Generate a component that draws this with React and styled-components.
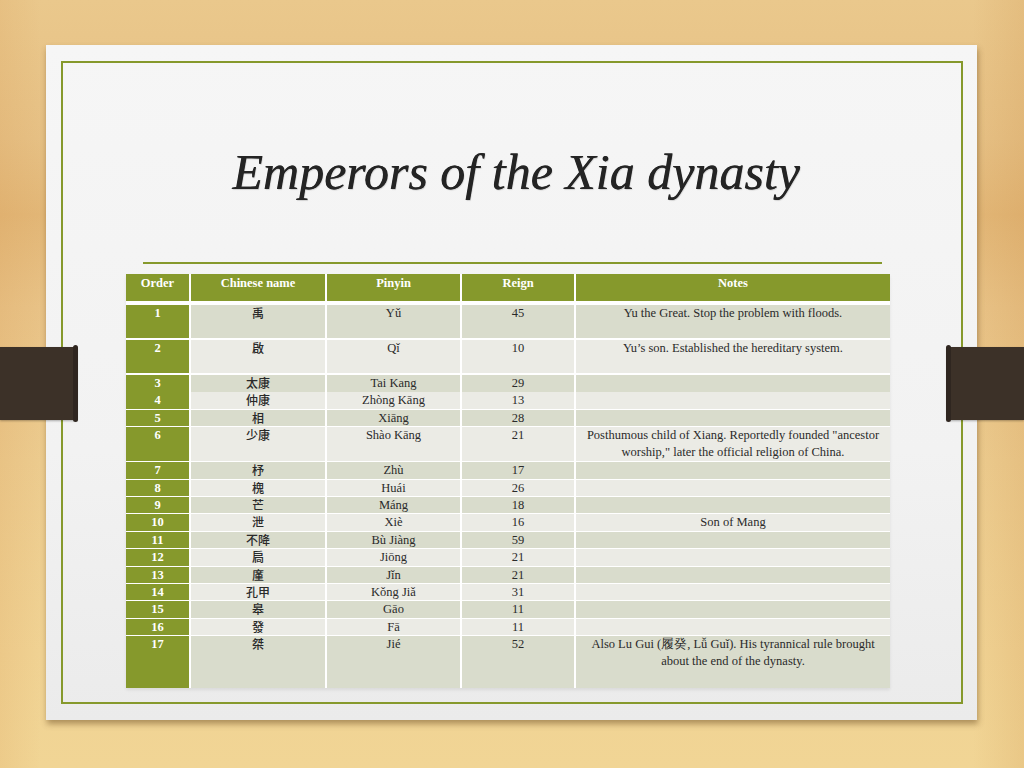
import styled, { createGlobalStyle } from 'styled-components';

const GlobalStyle = createGlobalStyle`
  html, body {
    margin: 0;
    padding: 0;
  }
  body {
    font-family: "Liberation Serif", serif;
  }
`;

const Desk = styled.div`
  position: relative;
  width: 1024px;
  height: 768px;
  overflow: hidden;
  box-sizing: border-box;
  padding: 45px 0 0 46px;
  background:
    linear-gradient(90deg, rgba(214, 150, 80, 0.16) 0%, rgba(214, 150, 80, 0) 4%, rgba(214, 150, 80, 0) 95%, rgba(200, 140, 70, 0.18) 100%),
    linear-gradient(180deg, #eac88c 0%, #e6c084 18%, #e2b676 28%, #e8c286 40%, #eccb8e 60%, #f0d293 85%, #f1d595 100%);
`;

const Paper = styled.div`
  width: 931px;
  height: 675px;
  box-sizing: border-box;
  padding: 16px 14px 16px 15px;
  background: linear-gradient(180deg, #f6f6f6 0%, #f2f2f2 60%, #ebebeb 100%);
  box-shadow: 1px 4px 6px rgba(90, 60, 20, 0.45);
`;

const Frame = styled.div`
  width: 902px;
  height: 643px;
  box-sizing: border-box;
  border: 2px solid #86992c;
  display: flex;
  flex-direction: column;
`;

const Title = styled.h1`
  margin: 84px 0 0;
  padding-left: 8px;
  font-family: "Liberation Serif", serif;
  font-style: italic;
  font-weight: normal;
  font-size: 50px;
  line-height: 50px;
  text-align: center;
  color: #242424;
  text-shadow: 0.5px 0 0 #242424, 1px 1px 1px rgba(0, 0, 0, 0.15);
`;

const Rule = styled.div`
  margin: 65px 0 0 80px;
  width: 739px;
  height: 2px;
  background: #86992c;
`;

const Table = styled.div`
  margin: 10px 0 0 63px;
  width: 764px;
  display: flex;
  flex-direction: column;
  background: #ffffff;
  box-shadow: 0 2px 3px rgba(0, 0, 0, 0.08);
`;

const Row = styled.div`
  display: grid;
  grid-template-columns: 63px 134px 133px 112px 314px;
  column-gap: 2px;
  margin-bottom: ${p => (p.$head ? '4px' : p.$last ? '0' : '2px')};
  height: ${p => p.$h}px;
`;

const Cell = styled.div`
  background: ${p => (p.$head || p.$order ? '#86992c' : p.$odd ? '#d9dccc' : '#ebebe5')};
  color: ${p => (p.$head || p.$order ? '#ffffff' : '#2a2a2a')};
  font-family: ${p => (p.$zh ? '"Noto Sans CJK TC", "Noto Sans CJK SC", sans-serif' : '"Liberation Serif", serif')};
  font-weight: ${p => (p.$head || p.$order ? 'bold' : p.$zh ? 500 : 'normal')};
  font-size: ${p => (p.$zh ? '12px' : '12.5px')};
  line-height: ${p => (p.$head ? '19px' : '16.5px')};
  text-align: center;
  overflow: visible;
  white-space: nowrap;
`;

const Note = styled(Cell)`
  white-space: normal;
  line-height: 17px;
  padding: 0 10px;
`;

const rows = [
  { o: 1, zh: '禹', py: 'Yǔ', r: 45, n: 'Yu the Great. Stop the problem with floods.', h: 33 },
  { o: 2, zh: '啟', py: 'Qǐ', r: 10, n: 'Yu’s son. Established the hereditary system.', h: 33 },
  { o: 3, zh: '太康', py: 'Tai Kang', r: 29 },
  { o: 4, zh: '仲康', py: 'Zhòng Kāng', r: 13 },
  { o: 5, zh: '相', py: 'Xiāng', r: 28 },
  {
    o: 6,
    zh: '少康',
    py: 'Shào Kāng',
    r: 21,
    n: 'Posthumous child of Xiang. Reportedly founded "ancestor worship," later the official religion of China.',
    h: 33,
  },
  { o: 7, zh: '杼', py: 'Zhù', r: 17 },
  { o: 8, zh: '槐', py: 'Huái', r: 26 },
  { o: 9, zh: '芒', py: 'Máng', r: 18 },
  { o: 10, zh: '泄', py: 'Xiè', r: 16, n: 'Son of Mang' },
  { o: 11, zh: '不降', py: 'Bù Jiàng', r: 59 },
  { o: 12, zh: '扃', py: 'Jiōng', r: 21 },
  { o: 13, zh: '廑', py: 'Jǐn', r: 21 },
  { o: 14, zh: '孔甲', py: 'Kǒng Jiǎ', r: 31 },
  { o: 15, zh: '皋', py: 'Gāo', r: 11 },
  { o: 16, zh: '發', py: 'Fā', r: 11 },
  {
    o: 17,
    zh: '桀',
    py: 'Jié',
    r: 52,
    n: 'Also Lu Gui (履癸, Lǚ Guǐ). His tyrannical rule brought about the end of the dynasty.',
    h: 52,
  },
];

const Tab = styled.div`
  position: absolute;
  top: 347px;
  ${p => (p.$side === 'left' ? 'left: 0;' : 'right: 0;')}
  width: 77px;
  height: 73px;
  background: #3c3128;
  box-shadow: 0 1px 2px rgba(0, 0, 0, 0.3);

  &::after {
    content: '';
    position: absolute;
    top: -2px;
    bottom: -2px;
    ${p => (p.$side === 'left' ? 'right: -1px;' : 'left: -1px;')}
    width: 5px;
    border-radius: 3px;
    background: #2f2620;
  }
`;

function App() {
  return (
    <>
      <GlobalStyle />
      <Desk>
        <Paper>
          <Frame>
            <Title>Emperors of the Xia dynasty</Title>
            <Rule />
            <Table>
              <Row $head $h={27}>
                <Cell $head>Order</Cell>
                <Cell $head>Chinese name</Cell>
                <Cell $head>Pinyin</Cell>
                <Cell $head>Reign</Cell>
                <Cell $head>Notes</Cell>
              </Row>
              {rows.map((row, i) => {
                const odd = i % 2 === 0;
                return (
                  <Row key={row.o} $h={row.h || 15.4} $last={i === rows.length - 1}>
                    <Cell $order>{row.o}</Cell>
                    <Cell $odd={odd} $zh>{row.zh}</Cell>
                    <Cell $odd={odd}>{row.py}</Cell>
                    <Cell $odd={odd}>{row.r}</Cell>
                    <Note $odd={odd}>{row.n}</Note>
                  </Row>
                );
              })}
            </Table>
          </Frame>
        </Paper>
        <Tab $side="left" />
        <Tab $side="right" />
      </Desk>
    </>
  );
}

export default App;
